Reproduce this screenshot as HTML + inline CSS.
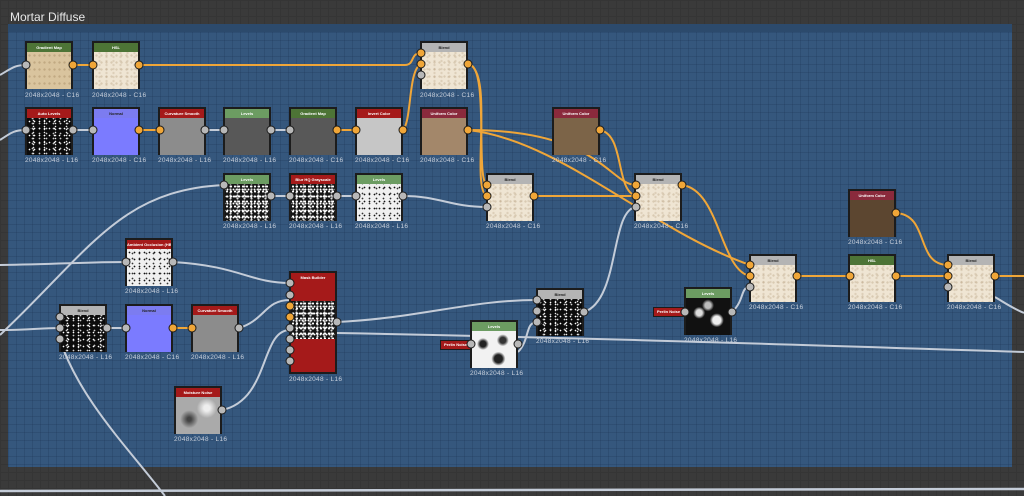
<!DOCTYPE html>
<html><head><meta charset="utf-8"><style>
*{margin:0;padding:0;box-sizing:border-box}
body{width:1024px;height:496px;overflow:hidden;background:#3a3a3a;font-family:"Liberation Sans",sans-serif;position:relative;
background-image:linear-gradient(#353535 1px,transparent 1px),linear-gradient(90deg,#353535 1px,transparent 1px);background-size:8px 8px}
#frame{position:absolute;left:8px;top:24px;width:1004px;height:443px;background:#35577d;
background-image:linear-gradient(rgba(20,40,70,.18) 1px,transparent 1px),linear-gradient(90deg,rgba(20,40,70,.18) 1px,transparent 1px);background-size:8px 8px}
#fh{position:absolute;left:8px;top:24px;width:1004px;height:8px;background:#2c4a6c}
#title{position:absolute;left:10px;top:10px;font-size:12px;color:#e8e8e8}
.n{position:absolute;width:48px;height:48px;border:2px solid #1c1c1c;background:#eee4d2}
.h{height:9px;font-size:4px;color:#fff;text-align:center;line-height:9px;font-weight:bold;white-space:nowrap;overflow:hidden}
.l{position:absolute;font-size:6.5px;color:#c8d0dc;white-space:nowrap;letter-spacing:.3px}
.g{background:#4d7436}.r{background:#a51a1a}.gy{background:#b4b4b4;color:#222}.b{background:#7c7cf0;color:#222}.lg{background:#6c9c62}.mr{background:#8a2a3c}
.cream{background:radial-gradient(circle,rgba(150,120,80,.25) 0.8px,transparent 1.5px) 0 0/5px 7px,radial-gradient(circle,rgba(150,120,80,.2) 0.8px,transparent 1.5px) 2px 3px/7px 4px,#efe5d3}
.tan{background:radial-gradient(circle,rgba(120,90,50,.25) 0.8px,transparent 1.5px) 0 0/5px 7px,#d9c49e}
.noise{background:radial-gradient(circle,#fff 0.6px,transparent 1px) 0 0/5px 7px,radial-gradient(circle,#ccc 0.6px,transparent 1.1px) 2px 3px/7px 5px,radial-gradient(circle,#eee 0.5px,transparent 1px) 1px 1px/11px 3px,#0c0c0c}
.wnoise{background:radial-gradient(circle,#111 0.6px,transparent 1.1px) 0 0/5px 7px,radial-gradient(circle,#333 0.6px,transparent 1.1px) 2px 2px/7px 5px,#f0f0f0}
.bw{background:radial-gradient(circle,#fff 0.8px,transparent 1.3px) 0 0/4px 5px,radial-gradient(circle,#ddd 0.8px,transparent 1.3px) 2px 1px/7px 3px,radial-gradient(circle,#fff 0.7px,transparent 1.2px) 1px 2px/3px 7px,#151515}
.blue{background:#7b7bff}.gray{background:#8c8c8c}.dgray{background:#585858}.lgray{background:#c6c6c6}
.body{height:37px}
.tag{position:absolute;height:10px;background:#a51a1a;border:1px solid #1c1c1c;font-size:4px;color:#fff;line-height:8px;padding:0 3px;font-weight:bold}
svg{position:absolute;left:0;top:0}
</style></head><body>
<div id="frame"></div><div id="fh"></div>
<div id="title">Mortar Diffuse</div>
<svg width="1024" height="496" fill="none" stroke-width="2">
<g stroke="#c4ccd8">
<path d="M0,75 C12,68 15,65 26,65"/>
<path d="M0,140 C12,132 15,130 26,130"/>
<path d="M73,130 H93"/><path d="M205,130 H224"/><path d="M271,130 H290"/>
<path d="M271,196 H290"/><path d="M337,196 H356"/>
<path d="M403,196 C440,196 450,207 487,207"/>
<path d="M224,185 C120,190 90,250 0,335"/>
<path d="M0,265 C60,264 90,262 126,262"/>
<path d="M173,262 C240,266 250,283 290,283"/>
<path d="M0,330 C30,330 40,328 60,328"/>
<path d="M107,328 H126"/>
<path d="M239,328 C265,320 265,300 290,300"/>
<path d="M222,410 C270,400 260,330 290,330"/>
<path d="M337,322 C420,318 470,300 537,300"/>
<path d="M337,333 C600,338 800,345 1024,352"/>
<path d="M518,352 C530,340 525,322 537,322"/>
<path d="M584,312 C620,300 610,210 636,207"/>
<path d="M732,312 C745,300 740,287 750,287"/>
<path d="M995,297 C1005,303 1012,308 1024,313"/>
<path d="M60,340 C80,400 130,450 165,496"/>
<path d="M0,491 L1024,489" stroke-width="2.5"/>
</g>
<g stroke="#f0a638">
<path d="M73,65 H93"/>
<path d="M139,65 H405 C415,65 410,53 421,53"/>
<path d="M403,130 C412,120 408,70 421,64"/>
<path d="M468,64 C490,64 475,180 487,185"/>
<path d="M468,64 C495,70 470,190 487,196"/>
<path d="M139,130 H160"/><path d="M337,130 H356"/>
<path d="M468,130 C600,130 610,185 636,185"/>
<path d="M468,130 C560,140 650,230 750,265"/>
<path d="M600,130 C625,135 615,190 636,196"/>
<path d="M534,196 H636"/>
<path d="M682,185 C720,190 720,270 750,276"/>
<path d="M797,276 H850"/><path d="M896,276 H948"/>
<path d="M896,213 C930,215 915,265 948,265"/>
<path d="M995,276 H1024"/>
<path d="M173,328 H192"/>
</g>
</svg>

<div class="n" style="left:25px;top:41px"><div class="h g">Gradient Map</div><div class="body tan"></div></div><div class="l" style="left:25px;top:92px">2048x2048 - C16</div>
<div class="n" style="left:92px;top:41px"><div class="h g">HSL</div><div class="body cream"></div></div><div class="l" style="left:92px;top:92px">2048x2048 - C16</div>
<div class="n" style="left:420px;top:41px"><div class="h gy">Blend</div><div class="body cream"></div></div><div class="l" style="left:420px;top:92px">2048x2048 - C16</div>
<div class="n" style="left:25px;top:107px"><div class="h r">Auto Levels</div><div class="body noise"></div></div><div class="l" style="left:25px;top:157px">2048x2048 - L16</div>
<div class="n" style="left:92px;top:107px"><div class="h b">Normal</div><div class="body blue"></div></div><div class="l" style="left:92px;top:157px">2048x2048 - C16</div>
<div class="n" style="left:158px;top:107px"><div class="h r">Curvature Smooth</div><div class="body gray"></div></div><div class="l" style="left:158px;top:157px">2048x2048 - L16</div>
<div class="n" style="left:223px;top:107px"><div class="h lg">Levels</div><div class="body dgray"></div></div><div class="l" style="left:223px;top:157px">2048x2048 - L16</div>
<div class="n" style="left:289px;top:107px"><div class="h g">Gradient Map</div><div class="body dgray"></div></div><div class="l" style="left:289px;top:157px">2048x2048 - C16</div>
<div class="n" style="left:355px;top:107px"><div class="h r">Invert Color</div><div class="body lgray"></div></div><div class="l" style="left:355px;top:157px">2048x2048 - C16</div>
<div class="n" style="left:420px;top:107px"><div class="h mr">Uniform Color</div><div class="body" style="background:#a3876a"></div></div><div class="l" style="left:420px;top:157px">2048x2048 - C16</div>
<div class="n" style="left:552px;top:107px"><div class="h mr">Uniform Color</div><div class="body" style="background:#7c6448"></div></div><div class="l" style="left:552px;top:157px">2048x2048 - C16</div>
<div class="n" style="left:223px;top:173px"><div class="h lg">Levels</div><div class="body bw"></div></div><div class="l" style="left:223px;top:223px">2048x2048 - L16</div>
<div class="n" style="left:289px;top:173px"><div class="h r">Blur HQ Grayscale</div><div class="body bw"></div></div><div class="l" style="left:289px;top:223px">2048x2048 - L16</div>
<div class="n" style="left:355px;top:173px"><div class="h lg">Levels</div><div class="body wnoise"></div></div><div class="l" style="left:355px;top:223px">2048x2048 - L16</div>
<div class="n" style="left:486px;top:173px"><div class="h gy">Blend</div><div class="body cream"></div></div><div class="l" style="left:486px;top:223px">2048x2048 - C16</div>
<div class="n" style="left:634px;top:173px"><div class="h gy">Blend</div><div class="body cream"></div></div><div class="l" style="left:634px;top:223px">2048x2048 - C16</div>
<div class="n" style="left:848px;top:189px"><div class="h mr">Uniform Color</div><div class="body" style="background:#5c4630"></div></div><div class="l" style="left:848px;top:239px">2048x2048 - C16</div>
<div class="n" style="left:125px;top:238px"><div class="h r">Ambient Occlusion (HB...</div><div class="body wnoise"></div></div><div class="l" style="left:125px;top:288px">2048x2048 - L16</div>
<div class="n" style="left:749px;top:254px"><div class="h gy">Blend</div><div class="body cream"></div></div><div class="l" style="left:749px;top:304px">2048x2048 - C16</div>
<div class="n" style="left:848px;top:254px"><div class="h g">HSL</div><div class="body cream"></div></div><div class="l" style="left:848px;top:304px">2048x2048 - C16</div>
<div class="n" style="left:947px;top:254px"><div class="h gy">Blend</div><div class="body cream"></div></div><div class="l" style="left:947px;top:304px">2048x2048 - C16</div>
<div class="n" style="left:684px;top:287px"><div class="h lg">Levels</div><div class="body" style="background:radial-gradient(circle at 30% 40%,#ddd 3px,transparent 6px),radial-gradient(circle at 70% 60%,#eee 4px,transparent 7px),radial-gradient(circle at 50% 20%,#bbb 3px,transparent 6px),#111"></div></div><div class="l" style="left:684px;top:337px">2048x2048 - L16</div>
<div class="tag" style="left:653px;top:307px">Perlin Noise</div>
<div class="n" style="left:59px;top:304px"><div class="h gy">Blend</div><div class="body noise"></div></div><div class="l" style="left:59px;top:354px">2048x2048 - L16</div>
<div class="n" style="left:125px;top:304px"><div class="h b">Normal</div><div class="body blue"></div></div><div class="l" style="left:125px;top:354px">2048x2048 - C16</div>
<div class="n" style="left:191px;top:304px"><div class="h r">Curvature Smooth</div><div class="body gray"></div></div><div class="l" style="left:191px;top:354px">2048x2048 - L16</div>
<div class="n" style="left:289px;top:271px;height:103px;background:#a51a1a"><div class="h r">Mask Builder</div><div style="margin-top:19px;height:38px" class="bw"></div></div><div class="l" style="left:289px;top:376px">2048x2048 - L16</div>
<div class="n" style="left:536px;top:288px"><div class="h gy">Blend</div><div class="body noise"></div></div><div class="l" style="left:536px;top:338px">2048x2048 - L16</div>
<div class="n" style="left:470px;top:320px"><div class="h lg">Levels</div><div class="body" style="background:radial-gradient(circle at 25% 35%,#222 3px,transparent 6px),radial-gradient(circle at 70% 25%,#333 3px,transparent 6px),radial-gradient(circle at 60% 75%,#222 4px,transparent 7px),#f2f2f2"></div></div><div class="l" style="left:470px;top:370px">2048x2048 - L16</div>
<div class="tag" style="left:440px;top:340px">Perlin Noise</div>
<div class="n" style="left:174px;top:386px"><div class="h r">Moisture Noise</div><div class="body" style="background:radial-gradient(circle at 30% 60%,#444 2px,transparent 9px),radial-gradient(circle at 70% 30%,#eee 3px,transparent 10px),#aaa"></div></div><div class="l" style="left:174px;top:436px">2048x2048 - L16</div>

<svg width="1024" height="496" stroke="#1c1c1c" stroke-width="1">
<g fill="#f0a638">
<circle cx="73" cy="65" r="4"/><circle cx="93" cy="65" r="4"/><circle cx="139" cy="65" r="4"/>
<circle cx="421" cy="53" r="4"/><circle cx="421" cy="64" r="4"/><circle cx="468" cy="64" r="4"/>
<circle cx="139" cy="130" r="4"/><circle cx="160" cy="130" r="4"/><circle cx="337" cy="130" r="4"/><circle cx="356" cy="130" r="4"/><circle cx="403" cy="130" r="4"/><circle cx="468" cy="130" r="4"/><circle cx="600" cy="130" r="4"/>
<circle cx="487" cy="185" r="4"/><circle cx="487" cy="196" r="4"/><circle cx="534" cy="196" r="4"/>
<circle cx="636" cy="185" r="4"/><circle cx="636" cy="196" r="4"/><circle cx="682" cy="185" r="4"/>
<circle cx="896" cy="213" r="4"/>
<circle cx="750" cy="265" r="4"/><circle cx="750" cy="276" r="4"/><circle cx="797" cy="276" r="4"/><circle cx="850" cy="276" r="4"/><circle cx="896" cy="276" r="4"/><circle cx="948" cy="265" r="4"/><circle cx="948" cy="276" r="4"/><circle cx="995" cy="276" r="4"/>
<circle cx="173" cy="328" r="4"/><circle cx="192" cy="328" r="4"/>
<circle cx="290" cy="306" r="4"/><circle cx="290" cy="317" r="4"/>
</g>
<g fill="#b8b8b8">
<circle cx="26" cy="65" r="4"/><circle cx="421" cy="75" r="4"/>
<circle cx="26" cy="130" r="4"/><circle cx="73" cy="130" r="4"/><circle cx="93" cy="130" r="4"/><circle cx="205" cy="130" r="4"/><circle cx="224" cy="130" r="4"/><circle cx="271" cy="130" r="4"/><circle cx="290" cy="130" r="4"/>
<circle cx="224" cy="185" r="4"/><circle cx="271" cy="196" r="4"/><circle cx="290" cy="196" r="4"/><circle cx="337" cy="196" r="4"/><circle cx="356" cy="196" r="4"/><circle cx="403" cy="196" r="4"/><circle cx="487" cy="207" r="4"/><circle cx="636" cy="207" r="4"/>
<circle cx="126" cy="262" r="4"/><circle cx="173" cy="262" r="4"/>
<circle cx="750" cy="287" r="4"/><circle cx="948" cy="287" r="4"/>
<circle cx="60" cy="317" r="4"/><circle cx="60" cy="328" r="4"/><circle cx="60" cy="339" r="4"/><circle cx="107" cy="328" r="4"/><circle cx="126" cy="328" r="4"/><circle cx="239" cy="328" r="4"/>
<circle cx="290" cy="283" r="4"/><circle cx="290" cy="295" r="4"/><circle cx="290" cy="328" r="4"/><circle cx="290" cy="339" r="4"/><circle cx="290" cy="350" r="4"/><circle cx="290" cy="361" r="4"/><circle cx="337" cy="322" r="4"/>
<circle cx="537" cy="300" r="4"/><circle cx="537" cy="311" r="4"/><circle cx="537" cy="322" r="4"/><circle cx="584" cy="312" r="4"/>
<circle cx="685" cy="312" r="4"/><circle cx="732" cy="312" r="4"/>
<circle cx="471" cy="344" r="4"/><circle cx="518" cy="344" r="4"/>
<circle cx="222" cy="410" r="4"/>
</g>
</svg>
</body></html>
